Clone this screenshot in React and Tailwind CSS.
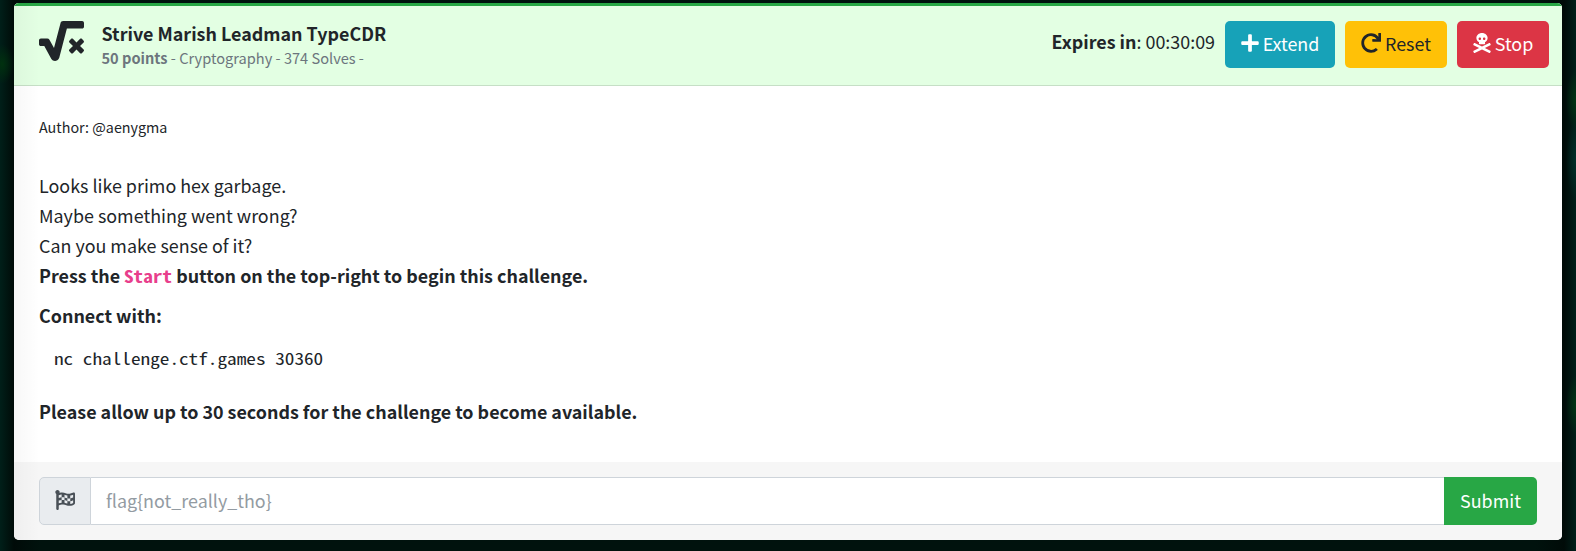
import React from "react";
import {
  FaSquareRootAlt,
  FaPlus,
  FaRedo,
  FaSkullCrossbones,
  FaFlagCheckered,
} from "react-icons/fa";

const MONO = "font-['Noto_Sans_Mono_CJK_JP','Noto_Sans_Mono_CJK_SC','Liberation_Mono',monospace]";

function Header() {
  return (
    <header className="flex h-[83px] items-start border-t-[3px] border-b border-t-[#28a745] border-b-[#c6dfc6] bg-[#e3ffe3] pr-[13px] pl-[25px]">
      <FaSquareRootAlt className="mt-[15px] h-[40px] w-[45px] shrink-0" />
      <div className="ml-[17.5px] flex-1 whitespace-nowrap">
        <div className="mt-[12px] h-[30px] text-[17.9px] leading-[30px] font-bold">Strive Marish Leadman TypeCDR</div>
        <div className="-mt-[2px] text-[14.6px] leading-6 text-[#6c757d]">
          <b>50 points</b> - Cryptography - 374 Solves -
        </div>
      </div>
      <div className="flex pt-[15px] text-[17.9px] whitespace-nowrap">
        <div className="mr-[10px] leading-[41px]">
          <b>Expires in</b>: 00:30:09
        </div>
        <button className="mr-[10px] flex h-[47px] w-[110px] items-center justify-center gap-[4px] rounded-[5px] bg-[#17a2b8] pb-[2px] text-white">
          <FaPlus className="mb-px h-5 w-[18px]" />
          Extend
        </button>
        <button className="mr-[10px] flex h-[47px] w-[102px] items-center justify-center gap-[4px] rounded-[5px] bg-[#ffc107] pb-[2px]">
          <FaRedo className="mb-[2px] h-5 w-5" />
          Reset
        </button>
        <button className="flex h-[47px] w-[92px] items-center justify-center gap-[4px] rounded-[5px] bg-[#dc3545] pb-[2px] text-white">
          <FaSkullCrossbones className="mb-[2px] h-5 w-[18px]" />
          Stop
        </button>
      </div>
    </header>
  );
}

function Description() {
  return (
    <main className="h-[376px] px-[25px] pt-[26px] text-[17.9px] leading-[30px] whitespace-nowrap">
      <p className="text-[14.33px]">Author: @aenygma</p>
      <p className="mt-[28px]">Looks like primo hex garbage.</p>
      <p>Maybe something went wrong?</p>
      <p>Can you make sense of it?</p>
      <p className="flex h-[30px] font-bold">
        <span className="whitespace-pre">Press the </span>
        <span className="w-[48px] pt-px">
          <span className={`block w-fit origin-left scale-x-[1.146] text-[16.8px] text-[#e83e8c] ${MONO}`}>Start</span>
        </span>
        <span className="whitespace-pre"> button on the top-right to begin this challenge.</span>
      </p>
      <p className="mt-[10px] font-bold">Connect with:</p>
      <pre className={`mt-[13px] ml-[15px] w-fit origin-left scale-x-[1.146] text-[16.8px] ${MONO}`}>nc challenge.ctf.games 30360</pre>
      <p className="mt-[23px] font-bold">Please allow up to 30 seconds for the challenge to become available.</p>
    </main>
  );
}

function Footer() {
  return (
    <footer className="flex h-[78px] bg-[#f6f6f6] px-[25px] pt-[15px] text-[17.9px]">
      <div className="flex h-[48px] w-[52px] items-center justify-center rounded-l-[5px] border border-[#ced4da] bg-[#e9ecef] text-[#495057]">
        <FaFlagCheckered className="mb-[2px] h-5 w-5" />
      </div>
      <input
        className="h-[48px] min-w-0 flex-1 border-y border-[#ced4da] bg-white px-[15px] pb-[2px] placeholder:text-[#939ba2]"
        placeholder="flag{not_really_tho}"
      />
      <button className="h-[48px] w-[93px] rounded-r-[5px] bg-[#28a745] pb-[2px] text-white">Submit</button>
    </footer>
  );
}

export default function App() {
  return (
    <div className="h-[551px] overflow-hidden bg-[#00120d] bg-[radial-gradient(12px_20px_at_2px_64px,#00310f,transparent),radial-gradient(10px_30px_at_1576px_100px,#003513,transparent),radial-gradient(10px_40px_at_1576px_160px,#00302a,transparent),radial-gradient(10px_30px_at_1576px_405px,#003513,transparent),linear-gradient(90deg,#001f19_0,#000b08_14px,#00120d_40px,#00120d_1536px,#000b08_1564px,#001f19_1576px)] pt-[3px] pr-[14px] pl-[14px] font-['Noto_Sans_CJK_JP',sans-serif] text-[#212529]">
      <div className="relative overflow-hidden rounded-[5px] bg-white">
        <Header />
        <Description />
        <Footer />
        <div className="pointer-events-none absolute inset-y-0 left-0 w-[26px] bg-linear-to-r from-black/3 to-transparent" />
      </div>
    </div>
  );
}
